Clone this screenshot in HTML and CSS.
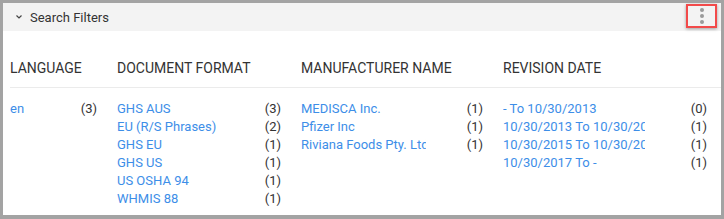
FILE: index.html
```html
<!DOCTYPE html>
<html>
<head>
<meta charset="utf-8">
<link rel="stylesheet" href="styles.css">
</head>
<body>
<div class="frame">
  <div class="panel">
    <div class="bar">
      <span class="chev"><svg width="8" height="6" viewBox="0 0 8 6"><path d="M1.5 1.5 L4 4 L6.5 1.5" fill="none" stroke="#444" stroke-width="1.2"/></svg></span>
      <span class="title">Search Filters</span>
      <span class="kebab"><i></i><i></i><i></i></span>
    </div>
    <div class="cols">
      <div class="col c1">
        <div class="head">LANGUAGE</div>
        <div class="rows">
          <div class="row"><span class="name">en</span><span class="cnt">(3)</span></div>
        </div>
      </div>
      <div class="col c2">
        <div class="head">DOCUMENT FORMAT</div>
        <div class="rows">
          <div class="row"><span class="name">GHS AUS</span><span class="cnt">(3)</span></div>
          <div class="row"><span class="name">EU (R/S Phrases)</span><span class="cnt">(2)</span></div>
          <div class="row"><span class="name">GHS EU</span><span class="cnt">(1)</span></div>
          <div class="row"><span class="name">GHS US</span><span class="cnt">(1)</span></div>
          <div class="row"><span class="name">US OSHA 94</span><span class="cnt">(1)</span></div>
          <div class="row"><span class="name">WHMIS 88</span><span class="cnt">(1)</span></div>
        </div>
      </div>
      <div class="col c3">
        <div class="head">MANUFACTURER NAME</div>
        <div class="rows">
          <div class="row"><span class="name">MEDISCA Inc.</span><span class="cnt">(1)</span></div>
          <div class="row"><span class="name">Pfizer Inc</span><span class="cnt">(1)</span></div>
          <div class="row"><span class="name">Riviana Foods Pty. Ltd</span><span class="cnt">(1)</span></div>
        </div>
      </div>
      <div class="col c4">
        <div class="head">REVISION DATE</div>
        <div class="rows">
          <div class="row"><span class="name">- To 10/30/2013</span><span class="cnt">(0)</span></div>
          <div class="row"><span class="name">10/30/2013 To 10/30/2015</span><span class="cnt">(1)</span></div>
          <div class="row"><span class="name">10/30/2015 To 10/30/2017</span><span class="cnt">(1)</span></div>
          <div class="row"><span class="name">10/30/2017 To -</span><span class="cnt">(1)</span></div>
        </div>
      </div>
    </div>
  </div>
</div>
</body>
</html>
```
FILE: styles.css
```css
html, body { margin: 0; padding: 0; }
body { background: #a3a3a3; font-family: Roboto, "Liberation Sans", sans-serif; }
.frame { width: 724px; height: 219px; box-sizing: border-box; padding: 3px 3px 4px 3px; }
.panel { background: #fff; height: 212px; overflow: hidden; }
.bar { height: 28px; background: #f3f3f3; display: flex; align-items: center; position: relative; }
.chev { width: 8px; height: 6px; margin-left: 12px; display: flex; }
.title { margin-left: 7px; font-size: 13px; color: #333; }
.kebab { position: absolute; left: 683px; top: 1px; width: 27px; height: 20px; border: 2px solid #f24a4a; box-shadow: 0 1px 3px rgba(0,0,0,0.35); display: flex; flex-direction: column; align-items: center; justify-content: center; gap: 2px; }
.kebab i { width: 4px; height: 4px; border-radius: 50%; background: #9a9a9a; display: block; }
.cols { display: flex; padding-left: 7px; }
.col { flex: none; }
.c1 { width: 107px; }
.c2 { width: 184px; }
.c3 { width: 202px; }
.c4 { width: 218px; }
.head { height: 57px; box-sizing: border-box; padding-top: 29px; font-size: 14px; color: #333; border-bottom: 1px solid #ebebeb; line-height: 17px; }
.rows { padding-top: 12px; }
.row { display: flex; height: 18px; line-height: 18px; font-size: 13px; }
.name { color: #3d8ee8; white-space: nowrap; overflow: hidden; }
.cnt { color: #333; margin-left: auto; padding-right: 20px; }
.c1 .name { width: 60px; }
.c2 .name { width: 140px; }
.c3 .name { width: 125px; }
.c4 .name { width: 142px; }
.c4 .cnt { padding-right: 14px; }
```
